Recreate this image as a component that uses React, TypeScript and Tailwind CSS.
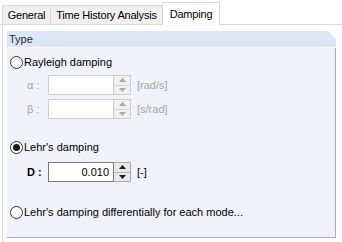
import React from 'react'

const font = { fontFamily: '"Liberation Sans", Arial, sans-serif' }

function Radio({ checked, label }: { checked?: boolean; label: string }) {
  return (
    <div className="flex h-[14px] items-center">
      <div className="ml-[3px] flex h-[13px] w-[13px] items-center justify-center rounded-full border border-[#333333] bg-white">
        {checked && <div className="h-[7px] w-[7px] rounded-full bg-[#1a1a1a]" />}
      </div>
      <span className="ml-[1px] text-[11px] text-black">{label}</span>
    </div>
  )
}

function Arrow({ up, color }: { up?: boolean; color: string }) {
  return (
    <svg width="7" height="4" viewBox="0 0 7 4">
      <path d={up ? 'M0 4 L3.5 0 L7 4 Z' : 'M0 0 L3.5 4 L7 0 Z'} fill={color} />
    </svg>
  )
}

function Spinner({ value, disabled }: { value?: string; disabled?: boolean }) {
  const border = disabled ? 'border-[#cfcfcf]' : 'border-[#7a7a7a]'
  return (
    <div className="flex h-[20px]">
      <div
        className={`flex w-[66px] items-center justify-end border ${border} bg-white pr-[4px] text-[11px] text-black`}
      >
        {value}
      </div>
      <div
        className={`flex w-[17px] flex-col border-y border-r ${
          disabled ? 'border-[#cfcfcf] bg-[#f0f0f0]' : 'border-[#acacac] bg-[#e8e8e8]'
        }`}
      >
        <div className="flex flex-1 items-center justify-center">
          <Arrow up color={disabled ? '#a8a8a8' : '#1a1a1a'} />
        </div>
        <div className={`h-px ${disabled ? 'bg-[#d8d8d8]' : 'bg-[#b8b8b8]'}`} />
        <div className="flex flex-1 items-center justify-center">
          <Arrow color={disabled ? '#a8a8a8' : '#1a1a1a'} />
        </div>
      </div>
    </div>
  )
}

function Row({
  label,
  unit,
  value,
  disabled,
  bold,
}: {
  label: string
  unit: string
  value?: string
  disabled?: boolean
  bold?: boolean
}) {
  const color = disabled ? 'text-[#a6a6a6]' : 'text-black'
  return (
    <div className="flex h-[20px] items-center">
      <span className={`ml-[20px] w-[21px] text-[11px] ${color} ${bold ? 'font-bold' : ''}`}>{label}</span>
      <Spinner value={value} disabled={disabled} />
      <span className={`ml-[6px] text-[11px] ${color}`}>{unit}</span>
    </div>
  )
}

export default function App() {
  const tabs = [
    { title: 'General', w: 'w-[48px]' },
    { title: 'Time History Analysis', w: 'w-[112px]' },
  ]

  return (
    <div className="h-[242px] w-[342px] overflow-hidden bg-white" style={font}>
      <div className="flex h-[25px] items-end border-b border-[#d9d9d9] pl-[2px]">
        {tabs.map(t => (
          <div
            key={t.title}
            className={`-mb-px flex h-[20px] ${t.w} items-center justify-center border border-r-0 border-[#d9d9d9] bg-[#f0f0f0] text-[11px] tracking-[-0.2px] text-black`}
          >
            {t.title}
          </div>
        ))}
        <div className="-mb-px flex h-[23px] w-[58px] items-center justify-center border border-b-0 border-[#d9d9d9] bg-white text-[11px] tracking-[-0.2px] text-black">
          Damping
        </div>
      </div>

      <div className="flex h-[217px] border-l border-[#d9d9d9] ml-[2px] pl-[4px] pt-[6px]">
        <div className="flex h-[207px] w-[329px] flex-col">
          <div className="flex h-[16px] items-center bg-[#dce6f4] pl-[2px] text-[11px] text-[#1e2a3a] [clip-path:polygon(0_0,calc(100%-8px)_0,100%_8px,100%_100%,0_100%)]">
            Type
          </div>
          <div className="h-px bg-[#f6f8fc]" />
          <div className="flex flex-1 flex-col border-b border-r border-[#a4a4e8] bg-[#eff3f9]">
            <div className="mt-[7px]">
              <Radio label="Rayleigh damping" />
            </div>
            <div className="mt-[6px]">
              <Row label="α :" unit="[rad/s]" disabled />
            </div>
            <div className="mt-[4px]">
              <Row label="β :" unit="[s/rad]" disabled />
            </div>
            <div className="mt-[21px]">
              <Radio checked label="Lehr's damping" />
            </div>
            <div className="mt-[8px]">
              <Row label="D :" unit="[-]" value="0.010" bold />
            </div>
            <div className="mt-[23px]">
              <Radio label="Lehr's damping differentially for each mode..." />
            </div>
          </div>
        </div>
      </div>
    </div>
  )
}
